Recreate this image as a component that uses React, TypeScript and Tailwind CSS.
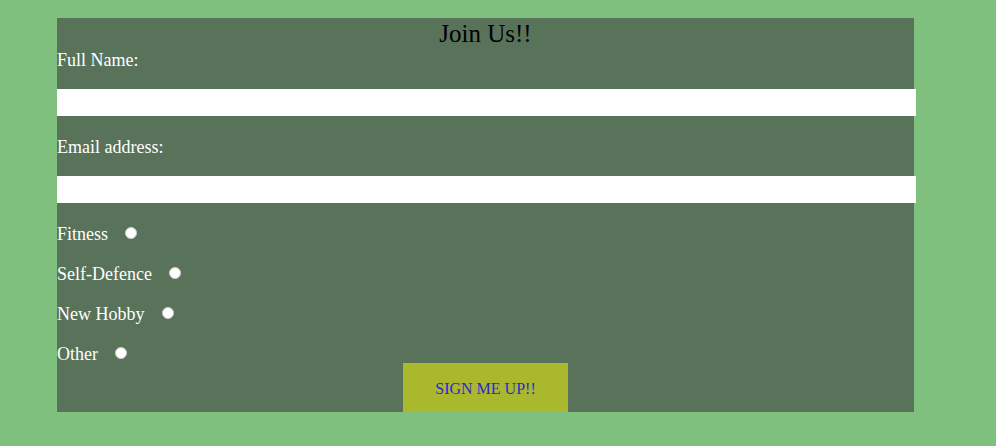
import React from "react";

export default function App() {
  const options = ["Fitness", "Self-Defence", "New Hobby", "Other"];
  return (
    <div className="w-[996px] h-[446px] bg-[#7fc07f] pt-[18px] pl-[57px]" style={{ fontFamily: '"Liberation Serif", serif' }}>
      <div className="w-[857px] bg-[#59725a] flex flex-col">
        <h1 className="h-[32px] leading-[32px] text-[25px] text-black text-center">Join Us!!</h1>
        <label className="h-[19px] leading-[20px] text-[18px] text-white">Full Name:</label>
        <input type="text" className="mt-[20px] h-[27px] w-[859px] bg-white border-0 outline-none" />
        <label className="mt-[21px] h-[19px] leading-[20px] text-[18px] text-white">Email address:</label>
        <input type="email" className="mt-[20px] h-[27px] w-[859px] bg-white border-0 outline-none" />
        <div className="mt-[20px] flex flex-col gap-5">
          {options.map((o) => (
            <div key={o} className="h-5 flex items-center text-[18px] text-white leading-5">
              <span className="mt-[2px]">{o}</span>
              <span className="ml-[17px] w-[12px] h-[12px] rounded-full bg-white border border-[#d0d0d0] -mt-[1px]" />
            </div>
          ))}
        </div>
        <div className="flex justify-center">
          <button className="w-[165px] h-[49px] pt-[2px] bg-[#aab82e] text-[#2a2acf] text-[16px]">SIGN ME UP!!</button>
        </div>
      </div>
    </div>
  );
}
